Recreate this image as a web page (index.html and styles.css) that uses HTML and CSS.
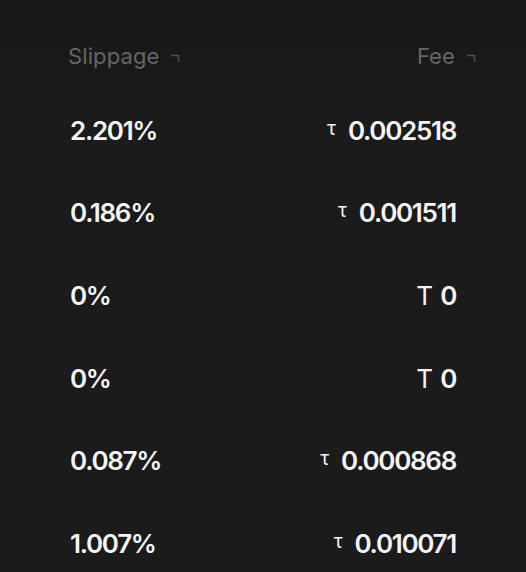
FILE: index.html
```html
<!DOCTYPE html>
<html>
<head>
<meta charset="utf-8">
<link rel="stylesheet" href="styles.css">
</head>
<body>
<div class="table">
  <div class="row head">
    <div class="cell left">Slippage <svg class="sort" width="9" height="8" viewBox="0 0 9 8"><path d="M0 1.5H7.5V8" fill="none" stroke="#505050" stroke-width="1.4"/></svg></div>
    <div class="cell right">Fee <svg class="sort" width="9" height="8" viewBox="0 0 9 8"><path d="M0 1.5H7.5V8" fill="none" stroke="#505050" stroke-width="1.4"/></svg></div>
  </div>
  <div class="row"><div class="cell left">2.201%</div><div class="cell right"><span class="tau">τ</span>0.002518</div></div>
  <div class="row"><div class="cell left">0.186%</div><div class="cell right"><span class="tau">τ</span>0.001511</div></div>
  <div class="row"><div class="cell left">0%</div><div class="cell right"><span class="big-tau">Τ</span>0</div></div>
  <div class="row"><div class="cell left">0%</div><div class="cell right"><span class="big-tau">Τ</span>0</div></div>
  <div class="row"><div class="cell left">0.087%</div><div class="cell right"><span class="tau">τ</span>0.000868</div></div>
  <div class="row"><div class="cell left">1.007%</div><div class="cell right"><span class="tau">τ</span>0.010071</div></div>
</div>
</body>
</html>
```
FILE: styles.css
```css
html, body {
  margin: 0;
  padding: 0;
  background: #1a1a1a;
}
body {
  background: linear-gradient(#171717 0px, #1b1b1b 120px);
  min-height: 572px;
  font-family: Inter, "Noto Sans", sans-serif;
  color: #f4f4f4;
}
.table {
  padding: 14px 70px 0 70px;
}
.row {
  display: flex;
  justify-content: space-between;
  align-items: center;
  height: 82.6px;
  font-size: 26px;
  font-weight: 600;
  letter-spacing: -0.05em;
}
.row.head {
  box-sizing: border-box;
  height: 75px;
  padding-top: 9px;
  font-size: 22px;
  font-weight: 400;
  letter-spacing: 0.005em;
  color: #666666;
}
.head .left { margin-left: -2px; }
.head .right { margin-right: -20px; }
.cell {
  display: flex;
  align-items: center;
}
.sort {
  margin-left: 12px;
  margin-top: 3px;
}
.tau {
  font-size: 19px;
  font-weight: 400;
  margin-right: 12px;
  letter-spacing: 0;
  margin-top: -4px;
}
.big-tau {
  font-weight: 400;
  margin-right: 7px;
  letter-spacing: 0;
}
```
